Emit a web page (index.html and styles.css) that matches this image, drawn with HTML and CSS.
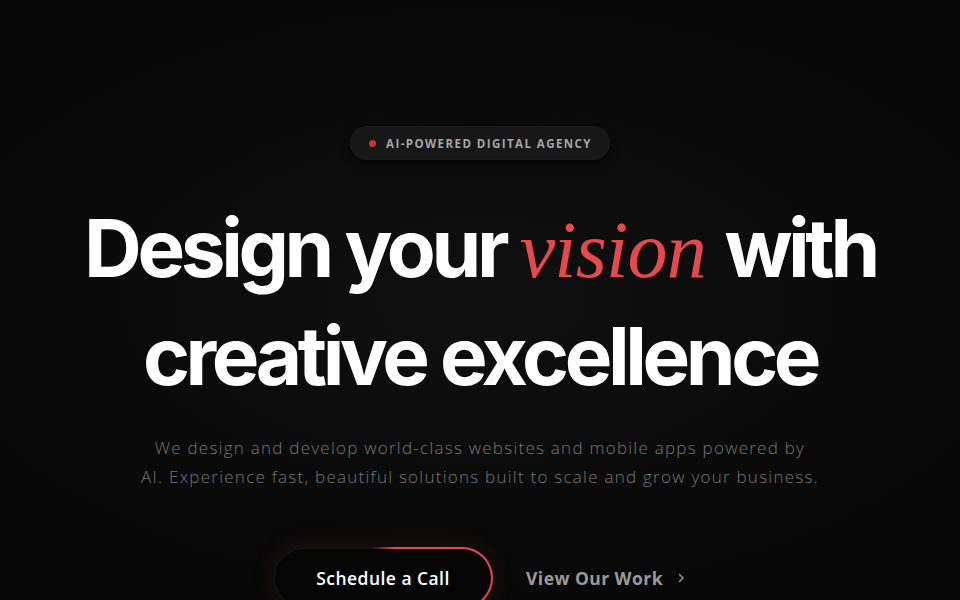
FILE: index.html
```html
<!DOCTYPE html>
<html lang="en">
<head>
<meta charset="utf-8">
<link rel="stylesheet" href="styles.css">
</head>
<body>
<main class="hero">
  <div class="badge"><span class="dot"></span>AI-POWERED DIGITAL AGENCY</div>
  <h1 class="title">Design your <em>vision</em> with<br>creative excellence</h1>
  <p class="lead">We design and develop world-class websites and mobile apps powered by<br>AI. Experience fast, beautiful solutions built to scale and grow your business.</p>
  <div class="actions">
    <a class="btn-primary"><span>Schedule a Call</span></a>
    <a class="btn-link">View Our Work
      <svg width="12" height="12" viewBox="0 0 12 12"><path d="M4.5 2.5 L8 6 L4.5 9.5" fill="none" stroke="#9a9a9a" stroke-width="1.4" stroke-linecap="round" stroke-linejoin="round"/></svg>
    </a>
  </div>
</main>
</body>
</html>
```
FILE: styles.css
```css
html, body { margin: 0; padding: 0; }
body {
  width: 960px; height: 600px; overflow: hidden;
  background: radial-gradient(ellipse 70% 60% at 50% 50%, #101010 0%, #0a0a0a 60%, #070707 100%);
  font-family: "Inter", sans-serif;
  color: #fff;
}
.hero {
  display: flex; flex-direction: column; align-items: center;
  padding-top: 127px;
}
.badge {
  display: flex; align-items: center; gap: 10px;
  height: 32px; padding: 0 17px 0 18px;
  border-radius: 16px;
  background: #171717;
  box-shadow: 0 0 0 1px #1b1b1b, 0 2px 10px rgba(0,0,0,0.6);
  font-family: "Open Sans", sans-serif;
  font-weight: 700; font-size: 11.5px; letter-spacing: 0.125em;
  color: #a5a5a5;
}
.dot { width: 7px; height: 7px; border-radius: 50%; background: #c2383d; }
.title {
  margin: 36px 0 0;
  font-family: "Inter", sans-serif;
  font-weight: 700; font-size: 80px; line-height: 106px;
  letter-spacing: -0.055em;
  text-align: center;
  color: #fff;
}
.title em {
  font-family: "Liberation Serif", serif;
  font-style: italic; font-weight: 400;
  color: #e5484d;
  letter-spacing: -0.01em;
  padding-right: 4px;
}
.lead {
  margin: 24px 0 0;
  font-family: "Open Sans", sans-serif;
  font-weight: 300; font-size: 17px; line-height: 29px;
  letter-spacing: 1.25px;
  color: #777; text-align: center;
}
.actions {
  display: flex; align-items: center; gap: 33px;
  margin-top: 56px;
}
.btn-primary {
  display: flex; align-items: center; justify-content: center;
  width: 220px; height: 62px; box-sizing: border-box;
  border-radius: 31px;
  border: 2px solid transparent;
  background-image: linear-gradient(#050505, #050505), linear-gradient(90deg, #111 0%, #111 45%, #e5484d 55%, #e5484d 100%);
  background-origin: border-box; background-clip: padding-box, border-box;
  box-shadow: 0 0 24px rgba(229,72,77,0.13);
  font-family: "Open Sans", sans-serif; font-weight: 600; font-size: 17.5px;
  letter-spacing: 0.45px;
  color: #fff;
}
.btn-link {
  display: flex; align-items: center; gap: 12px;
  font-family: "Open Sans", sans-serif; font-weight: 700; font-size: 17.5px;
  letter-spacing: 0.45px;
  color: #9a9a9a;
}
```
